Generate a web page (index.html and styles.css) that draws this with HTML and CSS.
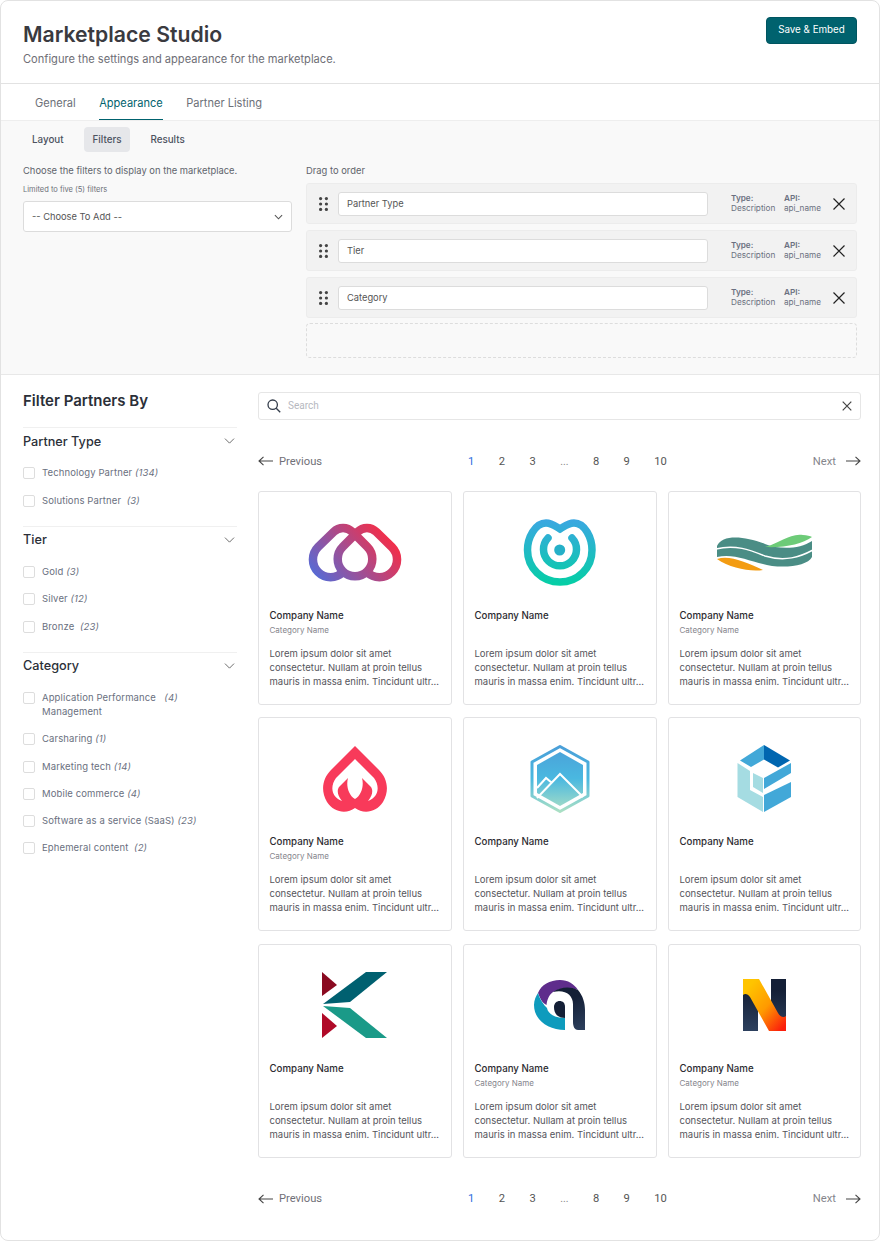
FILE: index.html
```html
<!DOCTYPE html>
<html lang="en">
<head>
<meta charset="utf-8">
<title>Marketplace Studio</title>
<link rel="stylesheet" href="styles.css">
</head>
<body>
<div class="frame">
  <header class="header">
    <div>
      <h1 class="title">Marketplace Studio</h1>
      <p class="subtitle">Configure the settings and appearance for the marketplace.</p>
    </div>
    <button class="save">Save &amp; Embed</button>
  </header>
  <nav class="tabs">
    <span class="tab">General</span>
    <span class="tab tab-active">Appearance</span>
    <span class="tab">Partner Listing</span>
  </nav>
  <section class="panel">
    <div class="subtabs">
      <span class="subtab">Layout</span>
      <span class="subtab subtab-active">Filters</span>
      <span class="subtab">Results</span>
    </div>
    <div class="config">
      <div class="config-left">
        <p class="config-label">Choose the filters to display on the marketplace.</p>
        <p class="config-hint">Limited to five (5) filters</p>
        <div class="select">
          <span>-- Choose To Add --</span>
          <svg class="select-chevron" viewBox="0 0 10 6" width="9" height="6"><path d="M1 1l4 4 4-4" fill="none" stroke="#555" stroke-width="1.2"/></svg>
        </div>
      </div>
      <div class="config-right">
        <p class="config-label drag-label">Drag to order</p>
        <div class="rows">
          <div class="row">
            <svg class="grip" viewBox="0 0 9 14" width="9" height="14"><g fill="#444"><circle cx="1.6" cy="1.6" r="1.6"/><circle cx="7.4" cy="1.6" r="1.6"/><circle cx="1.6" cy="7" r="1.6"/><circle cx="7.4" cy="7" r="1.6"/><circle cx="1.6" cy="12.4" r="1.6"/><circle cx="7.4" cy="12.4" r="1.6"/></g></svg>
            <div class="row-input">Partner Type</div>
            <div class="meta meta-type"><b>Type:</b><span>Description</span></div>
            <div class="meta meta-api"><b>API:</b><span>api_name</span></div>
            <svg class="row-close" viewBox="0 0 12 12" width="12" height="12"><path d="M.5.5l11 11M11.5.5l-11 11" stroke="#222" stroke-width="1.2" fill="none"/></svg>
          </div>
          <div class="row">
            <svg class="grip" viewBox="0 0 9 14" width="9" height="14"><g fill="#444"><circle cx="1.6" cy="1.6" r="1.6"/><circle cx="7.4" cy="1.6" r="1.6"/><circle cx="1.6" cy="7" r="1.6"/><circle cx="7.4" cy="7" r="1.6"/><circle cx="1.6" cy="12.4" r="1.6"/><circle cx="7.4" cy="12.4" r="1.6"/></g></svg>
            <div class="row-input">Tier</div>
            <div class="meta meta-type"><b>Type:</b><span>Description</span></div>
            <div class="meta meta-api"><b>API:</b><span>api_name</span></div>
            <svg class="row-close" viewBox="0 0 12 12" width="12" height="12"><path d="M.5.5l11 11M11.5.5l-11 11" stroke="#222" stroke-width="1.2" fill="none"/></svg>
          </div>
          <div class="row">
            <svg class="grip" viewBox="0 0 9 14" width="9" height="14"><g fill="#444"><circle cx="1.6" cy="1.6" r="1.6"/><circle cx="7.4" cy="1.6" r="1.6"/><circle cx="1.6" cy="7" r="1.6"/><circle cx="7.4" cy="7" r="1.6"/><circle cx="1.6" cy="12.4" r="1.6"/><circle cx="7.4" cy="12.4" r="1.6"/></g></svg>
            <div class="row-input">Category</div>
            <div class="meta meta-type"><b>Type:</b><span>Description</span></div>
            <div class="meta meta-api"><b>API:</b><span>api_name</span></div>
            <svg class="row-close" viewBox="0 0 12 12" width="12" height="12"><path d="M.5.5l11 11M11.5.5l-11 11" stroke="#222" stroke-width="1.2" fill="none"/></svg>
          </div>
          <div class="drop-zone"></div>
        </div>
      </div>
    </div>
  </section>
  <section class="preview">
    <aside class="sidebar">
      <h2 class="side-title">Filter Partners By</h2>
      <div class="group">
        <div class="group-head"><span>Partner Type</span><svg viewBox="0 0 12 7" width="11" height="6"><path d="M.7.7L6 6l5.300-5.300" fill="none" stroke="#555" stroke-width="1"/></svg></div>
        <label class="check"><i class="box"></i><span>Technology Partner <em>(134)</em></span></label>
        <label class="check"><i class="box"></i><span>Solutions Partner&nbsp; <em>(3)</em></span></label>
      </div>
      <div class="group">
        <div class="group-head"><span>Tier</span><svg viewBox="0 0 12 7" width="11" height="6"><path d="M.7.7L6 6l5.300-5.300" fill="none" stroke="#555" stroke-width="1"/></svg></div>
        <label class="check"><i class="box"></i><span>Gold <em>(3)</em></span></label>
        <label class="check"><i class="box"></i><span>Silver <em>(12)</em></span></label>
        <label class="check"><i class="box"></i><span>Bronze&nbsp; <em>(23)</em></span></label>
      </div>
      <div class="group">
        <div class="group-head"><span>Category</span><svg viewBox="0 0 12 7" width="11" height="6"><path d="M.7.7L6 6l5.300-5.300" fill="none" stroke="#555" stroke-width="1"/></svg></div>
        <label class="check"><i class="box"></i><span>Application Performance&nbsp; &nbsp;<em>(4)</em><br>Management</span></label>
        <label class="check"><i class="box"></i><span>Carsharing <em>(1)</em></span></label>
        <label class="check"><i class="box"></i><span>Marketing tech <em>(14)</em></span></label>
        <label class="check"><i class="box"></i><span>Mobile commerce <em>(4)</em></span></label>
        <label class="check"><i class="box"></i><span>Software as a service (SaaS) <em>(23)</em></span></label>
        <label class="check"><i class="box"></i><span>Ephemeral content&nbsp; <em>(2)</em></span></label>
      </div>
    </aside>
    <div class="results">
      <div class="search">
        <svg viewBox="0 0 14 14" width="14" height="14"><circle cx="5.7" cy="5.7" r="4.7" fill="none" stroke="#333c4a" stroke-width="1.3"/><path d="M9.2 9.2l4 4" stroke="#333c4a" stroke-width="1.3"/></svg>
        <span class="search-text">Search</span>
        <svg viewBox="0 0 10 10" width="10" height="10"><path d="M.7.7l8.600 8.600M9.300.7L.7 9.300" stroke="#444" stroke-width="1.2"/></svg>
      </div>
      <div class="pager pager-top">
        <span class="pager-end"><svg viewBox="0 0 15 10" width="15" height="10"><path d="M15 5H1M5.500.8L1 5l4.500 4.200" fill="none" stroke="#444" stroke-width="1.100"/></svg>Previous</span>
        <span class="pages"><span class="current">1</span><span>2</span><span>3</span><span class="dots">...</span><span>8</span><span>9</span><span>10</span></span>
        <span class="pager-end pager-next">Next<svg viewBox="0 0 15 10" width="15" height="10"><path d="M0 5h14M9.500.8L14 5l-4.500 4.200" fill="none" stroke="#444" stroke-width="1.100"/></svg></span>
      </div>
      <div class="cards">
        <article class="card">
          <svg class="logo" viewBox="295 513 120 80"><defs><linearGradient id="g1" gradientUnits="userSpaceOnUse" x1="322" y1="582" x2="388" y2="526"><stop offset="0" stop-color="#5a69d2"/><stop offset="1" stop-color="#ff2a3f"/></linearGradient></defs><path d="M343 572A17.500 17.500 0 0 1 318.100 547.100L333.800 531.800A13 13 0 0 1 352.300 531.800L367.200 546.800A17.300 17.300 0 1 1 342.800 546.800L357.700 531.800A13 13 0 0 1 376.200 531.800L391.900 547.100A17.500 17.500 0 0 1 367 572" fill="none" stroke="url(#g1)" stroke-width="8.500"/></svg>
          <h3 class="name">Company Name</h3><p class="cat">Category Name</p>
          <p class="desc">Lorem ipsum dolor sit amet consectetur. Nullam at proin tellus mauris in massa enim. Tincidunt ultr…</p>
        </article>
        <article class="card">
          <svg class="logo" viewBox="500 513 120 80"><defs><linearGradient id="g2" gradientUnits="userSpaceOnUse" x1="560" y1="519" x2="560" y2="586"><stop offset="0" stop-color="#3ba7e2"/><stop offset="1" stop-color="#04cfa4"/></linearGradient></defs><path d="M560 529C555 526 552 523 546 523C535 523 527.500 538 527.500 550C527.500 568 542 582 560 582C578 582 592 568 592 550C592 538 585 523 574 523C568 523 565 526 560 529ZM548 538A16.500 16.500 0 1 0 572 538" fill="none" stroke="url(#g2)" stroke-width="7.500" stroke-linecap="round"/><circle cx="559.700" cy="550" r="5.500" fill="#25b0c8"/></svg>
          <h3 class="name">Company Name</h3><p class="cat"></p>
          <p class="desc">Lorem ipsum dolor sit amet consectetur. Nullam at proin tellus mauris in massa enim. Tincidunt ultr…</p>
        </article>
        <article class="card">
          <svg class="logo" viewBox="705 513 120 80"><path d="M717 546C722 534 745 536 765 544C780 550 800 549 812 541V557C808 565 790 568 772 566C750 562 735 553 717 557Z" fill="#4a8d85"/><path d="M716 549C735 544 750 550 765 556C785 562 800 557 813 550" fill="none" stroke="#fff" stroke-width="1.500"/><path d="M717 559C730 555 745 562 763 570C750 572 730 568 717 559Z" fill="#f39c12"/><path d="M765 547C780 543 790 533 803 535C807 535 810 536 812 537C802 544 785 548 765 547Z" fill="#6dcb78"/></svg>
          <h3 class="name">Company Name</h3><p class="cat">Category Name</p>
          <p class="desc">Lorem ipsum dolor sit amet consectetur. Nullam at proin tellus mauris in massa enim. Tincidunt ultr…</p>
        </article>
        <article class="card">
          <svg class="logo" viewBox="295 739 120 80"><path fill-rule="evenodd" d="M355 746L331 770C323 778 320 790 327 802C334 813 347 814 355 808C363 814 376 813 383 802C390 790 387 778 379 770ZM355 759L336 778C330 786 331 797 342 801C337 795 337 790 339 787L348 778C346 785 348 795 355 799C362 795 364 785 362 778L371 787C373 790 373 795 368 801C379 797 380 786 374 778Z" fill="#f83a5a"/></svg>
          <h3 class="name">Company Name</h3><p class="cat">Category Name</p>
          <p class="desc">Lorem ipsum dolor sit amet consectetur. Nullam at proin tellus mauris in massa enim. Tincidunt ultr…</p>
        </article>
        <article class="card">
          <svg class="logo" viewBox="500 739 120 80"><defs><linearGradient id="g5" gradientUnits="userSpaceOnUse" x1="560" y1="745" x2="560" y2="812"><stop offset="0" stop-color="#4a9ed8"/><stop offset=".5" stop-color="#4ab8e0"/><stop offset="1" stop-color="#ace0c4"/></linearGradient></defs><path d="M560 746.500L588 762V796L560 811.500L532 796V762Z" fill="none" stroke="url(#g5)" stroke-width="3" stroke-linejoin="round"/><path d="M560 752L583 765V793L560 806L537 793V765Z" fill="url(#g5)"/><path d="M537 788L546 778L552 783M537 798L560 774L583 797" fill="none" stroke="#fff" stroke-width="2"/></svg>
          <h3 class="name">Company Name</h3><p class="cat"></p>
          <p class="desc">Lorem ipsum dolor sit amet consectetur. Nullam at proin tellus mauris in massa enim. Tincidunt ultr…</p>
        </article>
        <article class="card">
          <svg class="logo" viewBox="705 739 120 80"><path d="M764 745L740 760.500L751 767L764 759.500Z" fill="#42a8d8"/><path d="M764 745L790 760.500L778 767.500L764 759.500Z" fill="#0066b0"/><path d="M737.500 763L750 771V790L763 797V812L737.500 797Z" fill="#a5dce2"/><path d="M753 773L763 778V793L753 787Z" fill="#a5dce2"/><path d="M764 778L791 763V773L764 789Z" fill="#42a8d8"/><path d="M764 795L791 782V797L764 812Z" fill="#42a8d8"/></svg>
          <h3 class="name">Company Name</h3><p class="cat"></p>
          <p class="desc">Lorem ipsum dolor sit amet consectetur. Nullam at proin tellus mauris in massa enim. Tincidunt ultr…</p>
        </article>
        <article class="card">
          <svg class="logo" viewBox="295 966 120 80"><path d="M322 972L337 985L322 996Z" fill="#8a0a20"/><path d="M322 1013L337 1026L322 1038Z" fill="#b00a28"/><path d="M366 972H387L350 1002L323 1004Z" fill="#006070"/><path d="M323 1006L350 1008L387 1038H366Z" fill="#1a9a88"/></svg>
          <h3 class="name">Company Name</h3><p class="cat"></p>
          <p class="desc">Lorem ipsum dolor sit amet consectetur. Nullam at proin tellus mauris in massa enim. Tincidunt ultr…</p>
        </article>
        <article class="card">
          <svg class="logo" viewBox="500 966 120 80"><defs><linearGradient id="g8" gradientUnits="userSpaceOnUse" x1="570" y1="1000" x2="585" y2="1030"><stop offset="0" stop-color="#141f36"/><stop offset="1" stop-color="#2d405e"/></linearGradient></defs><path d="M538 993C541 985 550 980 560 980C568 980 574 984 578 990C570 987 560 988 553 992C549 995 547 1000 546.500 1005C542 1003 540 998 538 993Z" fill="#5f2d8c"/><path d="M534 1005C534 1000 536 996 538 993C540 1000 544 1005 547 1008C548 1014 555 1018 565 1018V1030C548 1030 534 1020 534 1005Z" fill="#0e9bbd"/><path d="M554 1007C554 1003 557 1001 559.500 1001C563 1001 565 1003 565 1007V1018C558 1018 554 1014 554 1007Z" fill="#141f36"/><path d="M553 992C560 987 570 986 578 990C583 996 585 1003 585 1010V1030H578C575 1030 573 1027 573 1022V1004C573 995 565 989 553 992Z" fill="url(#g8)"/></svg>
          <h3 class="name">Company Name</h3><p class="cat">Category Name</p>
          <p class="desc">Lorem ipsum dolor sit amet consectetur. Nullam at proin tellus mauris in massa enim. Tincidunt ultr…</p>
        </article>
        <article class="card">
          <svg class="logo" viewBox="705 966 120 80"><defs><linearGradient id="g9" gradientUnits="userSpaceOnUse" x1="750" y1="985" x2="790" y2="1020"><stop offset="0" stop-color="#ffc400"/><stop offset=".5" stop-color="#ff9a00"/><stop offset="1" stop-color="#fb1e0c"/></linearGradient><linearGradient id="g9b" gradientUnits="userSpaceOnUse" x1="0" y1="990" x2="0" y2="1031"><stop offset="0" stop-color="#141f36"/><stop offset="1" stop-color="#2d405e"/></linearGradient></defs><path d="M743 990H758V1031H743Z" fill="url(#g9b)"/><path d="M771 979H786V1018H771Z" fill="url(#g9b)"/><path d="M743 979H759L778 1013C780 1017 784 1018 786 1016V1031H769L750 997C748 994 745 993 743 995Z" fill="url(#g9)"/></svg>
          <h3 class="name">Company Name</h3><p class="cat">Category Name</p>
          <p class="desc">Lorem ipsum dolor sit amet consectetur. Nullam at proin tellus mauris in massa enim. Tincidunt ultr…</p>
        </article>
      </div>
      <div class="pager pager-bottom">
        <span class="pager-end"><svg viewBox="0 0 15 10" width="15" height="10"><path d="M15 5H1M5.500.8L1 5l4.500 4.200" fill="none" stroke="#444" stroke-width="1.100"/></svg>Previous</span>
        <span class="pages"><span class="current">1</span><span>2</span><span>3</span><span class="dots">...</span><span>8</span><span>9</span><span>10</span></span>
        <span class="pager-end pager-next">Next<svg viewBox="0 0 15 10" width="15" height="10"><path d="M0 5h14M9.500.8L14 5l-4.500 4.200" fill="none" stroke="#444" stroke-width="1.100"/></svg></span>
      </div>
    </div>
  </section>
</div>
</body>
</html>
```

FILE: styles.css
```css
* { box-sizing: border-box; }
html, body { margin: 0; padding: 0; background: #fff; }
body { font-family: Inter, "Liberation Sans", sans-serif; color: #333; width: 880px; height: 1241px; overflow: hidden; }
h1, h2, h3, p { margin: 0; font-weight: normal; }
.frame { width: 880px; height: 1241px; border: 1px solid #e2e2e2; border-radius: 8px; overflow: hidden; background: #fff; }

.header { height: 83px; padding: 17px 22px 0 22px; display: flex; justify-content: space-between; align-items: flex-start; border-bottom: 1px solid #e2e2e2; }
.title { font-size: 21.200px; font-weight: 600; line-height: 32px; color: #3a3a3f; }
.subtitle { font-size: 11.100px; line-height: 16px; margin-top: 1px; color: #6e6e76; }
.save { width: 91px; height: 27px; margin-top: -1px; background: #00626e; color: #fff; border: 1px solid #005560; border-radius: 4px; font: 400 9.800px Inter, sans-serif; padding: 0 0 3px; }

.tabs { height: 37px; padding: 0 0 0 34px; display: flex; gap: 23.500px; border-bottom: 1px solid #eee; }
.tab { font-size: 11.050px; line-height: 38px; color: #6c7078; height: 36px; }
.tab-active { color: #00626e; border-bottom: 1px solid #00626e; }

.panel { height: 254px; background: #f9f9f9; border-bottom: 1px solid #e8e8e8; padding: 6px 22px 0; }
.subtabs { display: flex; gap: 11px; height: 25px; }
.subtab { padding: 0 9px; font-size: 9.800px; font-weight: 500; line-height: 25px; color: #4c5260; border-radius: 4px; }
.subtab-active { background: #e6e7ea; }
.config { display: flex; gap: 14px; margin-top: 11px; }
.config-left { width: 269px; }
.config-right { width: 551px; }
.config-label { font-size: 9.400px; line-height: 14px; color: #60646c; padding-top: 1px; height: 15px; }
.config-hint { font-size: 7.500px; line-height: 12px; margin-top: 6px; color: #6c7078; }
.select { height: 31px; margin-top: 5px; background: #fff; border: 1px solid #dcdcdc; border-radius: 3px; display: flex; align-items: center; justify-content: space-between; padding: 0 8px; font-size: 9.300px; color: #555; }
.rows { margin-top: 5px; display: flex; flex-direction: column; gap: 6px; }
.row { height: 41px; background: #f2f2f2; border: 1px solid #ececec; border-radius: 3px; display: flex; align-items: center; padding-left: 12px; }
.grip { flex: none; }
.row-input { width: 370px; height: 24px; margin-left: 10px; background: #fff; border: 1px solid #dcdcdc; border-radius: 3px; font-size: 9.300px; line-height: 21px; padding-left: 8px; color: #555; }
.meta { display: flex; flex-direction: column; font-size: 8.200px; line-height: 10px; color: #6a7080; padding-bottom: 2px; }
.meta b { font-weight: 600; }
.meta-type { width: 53px; margin-left: 23px; }
.meta-api { width: 49px; }
.row-close { flex: none; }
.drop-zone { height: 35px; margin-top: -1px; border: 1px dashed #ddd; border-radius: 4px; }

.preview { display: flex; padding: 0 18px 0 22px; gap: 21px; }
.sidebar { width: 214px; flex: none; padding-top: 16px; }
.side-title { font-size: 15px; font-weight: 600; line-height: 20px; color: #2b2f38; margin-bottom: 16px; }
.group { border-top: 1px solid #f0f0f0; padding-bottom: 11.700px; }
.group-head { display: flex; justify-content: space-between; align-items: center; height: 26px; padding-right: 2px; font-size: 12.700px; font-weight: 500; color: #2b2f38; margin-bottom: 5.800px; }
.check { display: flex; gap: 7px; font-size: 9.500px; line-height: 14px; color: #6a7080; letter-spacing: .12px; padding: 6.600px 0; }
.check em { font-style: italic; }
.box { flex: none; width: 12px; height: 12px; margin-top: 1px; border: 1px solid #ddd; border-radius: 2px; }

.results { width: 603px; flex: none; padding-top: 17px; }
.search { height: 28px; border: 1px solid #e6e6e6; border-radius: 3px; display: flex; align-items: center; padding: 0 8px; }
.search-text { flex: 1; margin-left: 7px; font: 10px Roboto, sans-serif; color: #b6b8c0; margin-top: -2px; }
.pager { display: flex; justify-content: space-between; align-items: center; height: 16px; font: 11.200px Roboto, sans-serif; color: #707078; }
.pager-top { margin-top: 33px; }
.pager-bottom { margin-top: 33px; }
.pager-end { display: flex; align-items: center; gap: 6px; }
.pager-next { gap: 10px; color: #85858c; }
.pages { display: flex; gap: 24.400px; color: #555; }
.current { color: #2f6fe0; }
.dots { color: #888; font-size: 10.500px; }
.cards { display: grid; grid-template-columns: 194px 194px 193px; column-gap: 11px; row-gap: 12.400px; margin-top: 22px; }
.card { height: 214px; border: 1px solid #e2e2e4; border-radius: 3px; padding: 21px 10px 0 10.500px; }
.logo { display: block; width: 120px; height: 80px; margin: 0 auto; }
.name { font-size: 9.700px; font-weight: 500; line-height: 14px; color: #2b2b30; margin-top: 16px; }
.cat { font-size: 8px; line-height: 12px; color: #85858c; height: 12px; margin-top: 1px; }
.desc { font-size: 9.500px; line-height: 14px; color: #55555c; margin-top: 11px; }
```
